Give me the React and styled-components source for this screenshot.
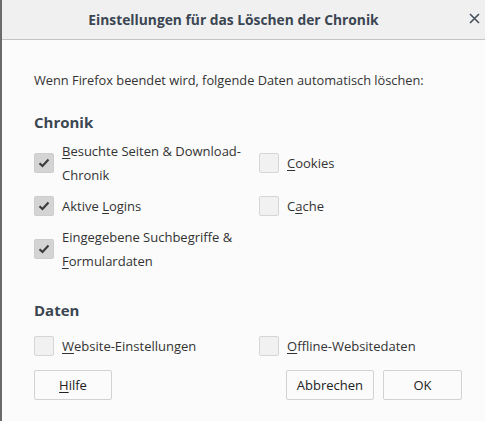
import styled, { createGlobalStyle } from "styled-components"

const GlobalStyle = createGlobalStyle`
  html, body {
    margin: 0;
    padding: 0;
    background: #fbfbfb;
  }
  body {
    font-family: "Open Sans", "Noto Sans", sans-serif;
    color: #333;
  }
`

const Frame = styled.div`
  display: flex;
  width: 485px;
  height: 421px;
  overflow: hidden;
`

const Edge = styled.div`
  width: 2px;
  flex: none;
  background: #6b6b6b;
`

const Dialog = styled.div`
  flex: 1;
  display: flex;
  flex-direction: column;
  background: #fbfbfb;
`

const TitleBar = styled.div`
  position: relative;
  height: 39px;
  display: flex;
  align-items: center;
  justify-content: center;
  background: #f0f0f0;
  border-bottom: 1px solid #c4c4c4;
`

const Title = styled.div`
  font-size: 13.8px;
  font-weight: 700;
  color: #3b4652;
  margin-right: 20px;
`

const CloseButton = styled.button`
  position: absolute;
  right: 3px;
  top: 10px;
  width: 16px;
  height: 16px;
  padding: 0;
  border: none;
  background: none;
  display: flex;
  align-items: center;
  justify-content: center;
`

const Body = styled.div`
  display: flex;
  flex-direction: column;
  padding: 28px 23px 0 32px;
`

const Intro = styled.p`
  margin: 0;
  font-size: 12.8px;
  line-height: 24px;
`

const Heading = styled.h3`
  margin: ${(p) => p.$top}px 0 0;
  font-size: 15px;
  font-weight: 700;
  line-height: 24px;
  color: #3b4652;
`

const Options = styled.div`
  display: grid;
  grid-template-columns: 225px 1fr;
  row-gap: 7px;
  margin-top: ${(p) => p.$top}px;
`

const Option = styled.label`
  display: flex;
  align-items: center;
  gap: 8px;
  font-size: 13px;
  line-height: 24px;
`

const Box = styled.span`
  flex: none;
  width: 18px;
  height: 18px;
  border: 1px solid ${(p) => (p.$checked ? "#cdcdcd" : "#d6d6d6")};
  border-radius: 2px;
  background: ${(p) => (p.$checked ? "#d4d4d4" : "#f1f1f1")};
  display: flex;
  align-items: center;
  justify-content: center;
`

const Key = styled.span`
  text-decoration: underline;
  text-underline-offset: 2px;
`

const Footer = styled.div`
  display: flex;
  gap: 9px;
  margin-top: 12px;
`

const Button = styled.button`
  height: 30px;
  min-width: ${(p) => p.$width}px;
  padding: 0 10px;
  border: 1px solid #d2d2d2;
  border-radius: 2px;
  background: #fbfbfb;
  font-family: inherit;
  font-size: 13px;
  color: #222;
  &:first-child {
    margin-right: auto;
  }
`

const Check = () => (
  <svg width="12" height="10" viewBox="0 0 12 10">
    <path d="M1.5 5.2 L4.5 8 L10.5 1.5" fill="none" stroke="#3a3a3a" strokeWidth="2" />
  </svg>
)

const Label = ({ text, k }) => {
  const i = text.indexOf(k)
  return (
    <span>
      {text.slice(0, i)}
      <Key>{k}</Key>
      {text.slice(i + k.length)}
    </span>
  )
}

const CheckOption = ({ checked, children }) => (
  <Option>
    <Box $checked={checked}>{checked && <Check />}</Box>
    {children}
  </Option>
)

export default function App() {
  return (
    <Frame>
      <GlobalStyle />
      <Edge />
      <Dialog>
        <TitleBar>
          <Title>Einstellungen für das Löschen der Chronik</Title>
          <CloseButton aria-label="Schließen">
            <svg width="11" height="11" viewBox="0 0 11 11">
              <path d="M1 1 L10 10 M10 1 L1 10" stroke="#46505a" strokeWidth="1.6" />
            </svg>
          </CloseButton>
        </TitleBar>
        <Body>
          <Intro>Wenn Firefox beendet wird, folgende Daten automatisch löschen:</Intro>
          <Heading $top={18}>Chronik</Heading>
          <Options $top={5}>
            <CheckOption checked>
              <span>
                <Key>B</Key>esuchte Seiten &amp; Download-<br />Chronik
              </span>
            </CheckOption>
            <CheckOption>
              <Label text="Cookies" k="C" />
            </CheckOption>
            <CheckOption checked>
              <Label text="Aktive Logins" k="L" />
            </CheckOption>
            <CheckOption>
              <Label text="Cache" k="a" />
            </CheckOption>
            <CheckOption checked>
              <span>
                Eingegebene Suchbegriffe &amp;<br />
                <Key>F</Key>ormulardaten
              </span>
            </CheckOption>
          </Options>
          <Heading $top={25}>Daten</Heading>
          <Options $top={12}>
            <CheckOption>
              <Label text="Website-Einstellungen" k="W" />
            </CheckOption>
            <CheckOption>
              <Label text="Offline-Websitedaten" k="O" />
            </CheckOption>
          </Options>
          <Footer>
            <Button $width={78}>
              <Label text="Hilfe" k="H" />
            </Button>
            <Button $width={88}>Abbrechen</Button>
            <Button $width={79}>OK</Button>
          </Footer>
        </Body>
      </Dialog>
    </Frame>
  )
}
